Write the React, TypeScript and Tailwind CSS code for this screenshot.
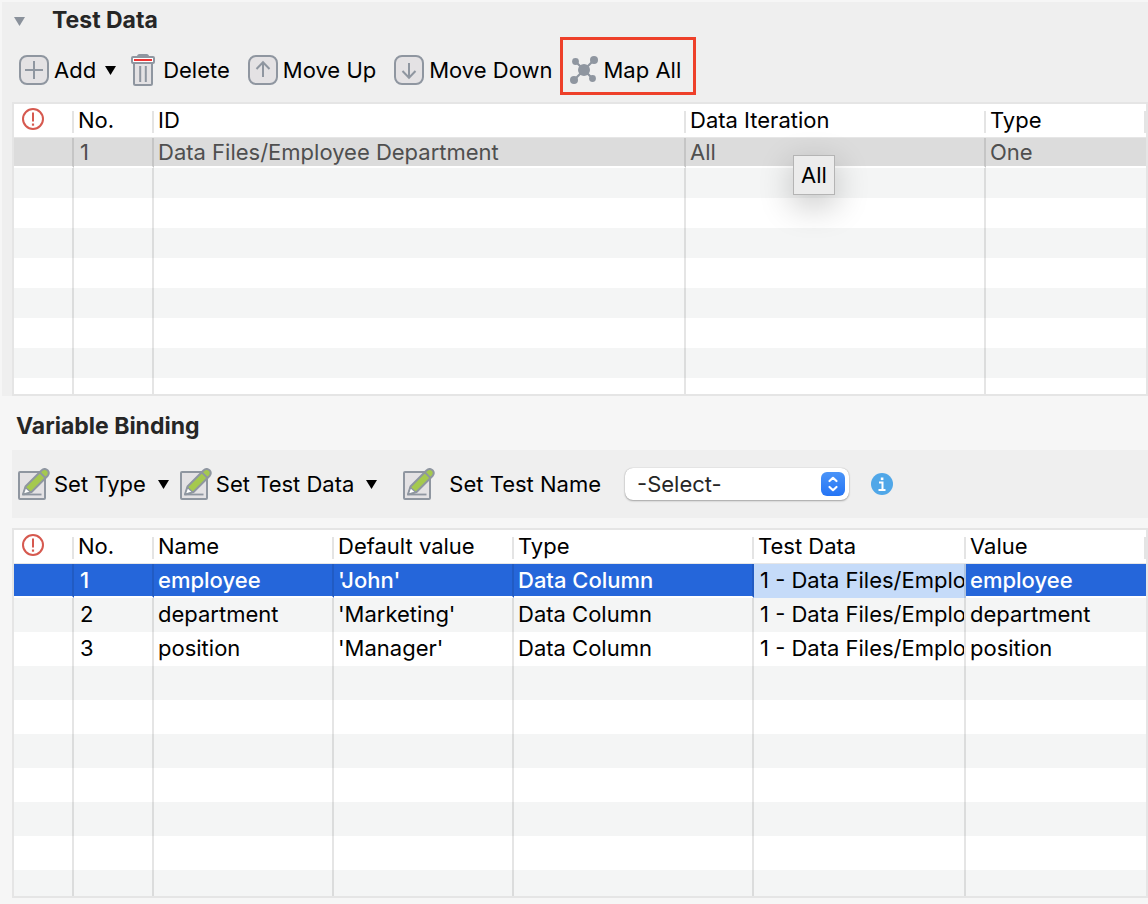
import React from "react";

type IconProps = { className?: string };

function PlusIcon() {
  return (
    <svg width="30" height="30" viewBox="0 0 30 30" fill="none" aria-hidden="true" className="shrink-0">
      <rect x="1" y="1" width="28" height="28" rx="7" fill="#e4e2e4" stroke="#8f96a0" strokeWidth="2" />
      <path d="M15 6v18M6 15h18" stroke="#8f96a0" strokeWidth="2" />
    </svg>
  );
}

function ArrowBoxIcon({ className = "" }: IconProps) {
  return (
    <svg width="30" height="30" viewBox="0 0 30 30" fill="none" aria-hidden="true" className={`shrink-0 ${className}`}>
      <rect x="1" y="1" width="28" height="28" rx="7" fill="#e4e2e4" stroke="#8f96a0" strokeWidth="2" />
      <path d="M15 22V7.5M8.5 14 15 7.2 21.5 14" stroke="#8f96a0" strokeWidth="2" />
    </svg>
  );
}

function TrashIcon() {
  return (
    <svg width="24" height="32" viewBox="0 0 24 32" fill="none" aria-hidden="true" className="shrink-0">
      <path d="M6 2.5Q6 0 8.5 0h7Q18 0 18 2.5z" fill="#8f96a0" />
      <path d="M3 9v20.5q0 1.5 1.5 1.5h15q1.5 0 1.5-1.5V9" fill="#e4e2e4" stroke="#8f96a0" strokeWidth="2" />
      <rect x="1" y="3" width="22" height="6" rx="1" fill="#fff" stroke="#8f96a0" strokeWidth="2" />
      <rect x="3" y="5" width="18" height="2" fill="#ee3333" />
      <path d="M9.200 12v16M14.800 12v16" stroke="#8f96a0" strokeWidth="2" />
    </svg>
  );
}

function NodesIcon() {
  return (
    <svg width="28" height="28" viewBox="0 0 28 28" aria-hidden="true" className="shrink-0">
      <path d="M6 6 14 14 23 5M22 22 14 14 4 24" stroke="#8f96a0" strokeWidth="2.2" fill="none" />
      <circle cx="14" cy="14" r="6" fill="#8f96a0" />
      <circle cx="5.5" cy="5.5" r="3.4" fill="#8f96a0" />
      <circle cx="24" cy="4" r="4" fill="#8f96a0" />
      <circle cx="22.5" cy="22.5" r="3.4" fill="#8f96a0" />
      <circle cx="4" cy="24" r="4" fill="#8f96a0" />
    </svg>
  );
}

function EditIcon() {
  return (
    <svg width="32" height="32" viewBox="0 0 32 32" fill="none" aria-hidden="true" className="shrink-0">
      <rect x="1" y="4" width="26" height="27" rx="1" fill="#e4e2e4" stroke="#8f96a0" strokeWidth="2" />
      <path d="M6 26.500h17.500" stroke="#8f96a0" strokeWidth="1.8" />
      <path d="M5 26.500 7.500 18.500 23.500 2.500Q26.500-.3 29.500 2.200 32 5 29.500 8L13.500 24z" fill="#a5c94e" stroke="#8f96a0" strokeWidth="2" strokeLinejoin="round" />
      <path d="M5 26.500 7.500 19.500 12.500 24z" fill="#fff" stroke="#8f96a0" strokeWidth="1.500" strokeLinejoin="round" />
      <path d="m22 4.500 5.500 5.500" stroke="#8f96a0" strokeWidth="1.8" />
    </svg>
  );
}

function AlertIcon() {
  return (
    <svg width="22" height="22" viewBox="0 0 22 22" fill="none" role="img" aria-label="Problems" className="shrink-0">
      <circle cx="11" cy="11" r="10" stroke="#d6594f" strokeWidth="2" />
      <path d="M11 4.500v9" stroke="#d6594f" strokeWidth="2" />
      <path d="M11 15.500v2.200" stroke="#d6594f" strokeWidth="2.200" />
    </svg>
  );
}

function InfoIcon() {
  return (
    <svg width="22" height="22" viewBox="0 0 22 22" fill="none" aria-hidden="true">
      <circle cx="11" cy="11" r="11" fill="#50a7e8" />
      <path d="M9.800 4.500h2.600v2.600H9.800z" fill="#fff" />
      <path d="M8 9.500h3.500v7M7.500 17h7" stroke="#fff" strokeWidth="2" />
    </svg>
  );
}

function Caret({ className = "" }: IconProps) {
  return (
    <svg width="11" height="9" viewBox="0 0 11 9" aria-hidden="true" className={`shrink-0 ${className}`}>
      <path d="M0 0h11L5.500 9z" fill="currentColor" />
    </svg>
  );
}

const headCell = "h-[34px] border-b border-[#e6e6e6] bg-white p-0 pt-0.5 text-left font-normal";

function HeadRow({ labels }: { labels: string[] }) {
  return (
    <tr>
      <th className={headCell}>
        <div className="flex h-[22px] items-center border-r-2 border-[#e4e4e4] pb-1.5 pl-2">
          <AlertIcon />
        </div>
      </th>
      {labels.map((label) => (
        <th key={label} scope="col" className={headCell}>
          <div className="flex h-[22px] items-center border-r-2 border-[#e4e4e4] pb-1 pl-1 whitespace-nowrap">
            {label}
          </div>
        </th>
      ))}
    </tr>
  );
}

const divider = "border-r-2 border-r-black/10 last:border-r-0";

function EmptyRows({ heights, columns }: { heights: string[]; columns: number }) {
  return (
    <>
      {heights.map((height, i) => (
        <tr key={i} className={i % 2 === 0 ? "bg-[#f4f5f5]" : "bg-white"}>
          {Array.from({ length: columns }, (_, c) => (
            <td key={c} className={`p-0 ${height} ${divider}`} />
          ))}
        </tr>
      ))}
    </>
  );
}

const bindings = [
  { no: 1, name: "employee", value: "'John'", selected: true },
  { no: 2, name: "department", value: "'Marketing'", selected: false },
  { no: 3, name: "position", value: "'Manager'", selected: false },
];

function TestDataSection() {
  const cell = `h-[30px] border-b-2 border-b-white p-0 ${divider}`;
  return (
    <section className="mt-0.5 ml-0.5 bg-[#efefef] pl-2.5">
      <div className="flex h-[35px] items-center">
        <button type="button" aria-label="Collapse Test Data" className="ml-0.5 flex w-[38px] text-[#8a919b]">
          <Caret className="mt-1" />
        </button>
        <h2 className="text-[23px] font-bold text-[#262626]">Test Data</h2>
      </div>
      <div className="flex h-[58px] items-stretch pl-[7px]">
        <button type="button" className="flex items-center gap-[5px] pt-2 whitespace-nowrap">
          <PlusIcon />
          Add
          <Caret className="ml-1" />
        </button>
        <button type="button" className="ml-[15px] flex items-center gap-2 pt-2">
          <TrashIcon />
          Delete
        </button>
        <button type="button" className="ml-[18px] flex items-center gap-[5px] pt-2 whitespace-nowrap">
          <ArrowBoxIcon />
          Move Up
        </button>
        <button type="button" className="ml-[18px] flex items-center gap-[5px] pt-2 whitespace-nowrap">
          <ArrowBoxIcon className="rotate-180" />
          Move Down
        </button>
        <button
          type="button"
          className="ml-[7px] flex items-center gap-1.5 border-[3px] border-[#ee402a] pt-2 pr-3 pl-[7px] whitespace-nowrap"
        >
          <NodesIcon />
          Map All
        </button>
      </div>
      <div className="mt-[7px] border-2 border-[#e5e5e5]">
        <table className="w-full table-fixed border-separate border-spacing-0">
          <colgroup>
            <col className="w-[60px]" />
            <col className="w-20" />
            <col />
            <col className="w-[300px]" />
            <col className="w-40" />
          </colgroup>
          <thead>
            <HeadRow labels={["No.", "ID", "Data Iteration", "Type"]} />
          </thead>
          <tbody>
            <tr className="bg-[#dcdcdc] text-[#4f4f4f]">
              <td className={cell} />
              <td className={`pl-1.5! ${cell}`}>1</td>
              <td className={`pl-1! ${cell}`}>Data Files/Employee Department</td>
              <td className={`relative pl-1! ${cell}`}>
                All
                <div
                  role="tooltip"
                  className="absolute top-[17px] left-[107px] z-10 flex h-10 w-[42px] items-center justify-center border border-[#b4b4b4] bg-[#ececec] text-black shadow-[0_10px_34px_rgba(0,0,0,0.24)]"
                >
                  All
                </div>
              </td>
              <td className={`pl-1! ${cell}`}>One</td>
            </tr>
            <EmptyRows
              columns={5}
              heights={["h-[30px]", "h-[30px]", "h-[30px]", "h-[30px]", "h-[30px]", "h-[30px]", "h-[30px]", "h-4"]}
            />
          </tbody>
        </table>
      </div>
    </section>
  );
}

function VariableBindingSection() {
  return (
    <section className="pb-1.5 pl-3">
      <h2 className="flex h-[54px] items-center pt-1.5 pl-1 text-[23px] font-bold text-[#262626]">Variable Binding</h2>
      <div className="flex h-[68px] items-center bg-[#efefef] pl-1.5">
        <button type="button" className="flex items-center gap-1 whitespace-nowrap">
          <EditIcon />
          Set Type
          <Caret className="ml-2" />
        </button>
        <button type="button" className="ml-[11px] flex items-center gap-1 whitespace-nowrap">
          <EditIcon />
          Set Test Data
          <Caret className="ml-2" />
        </button>
        <label htmlFor="test-name" className="ml-[26px] flex items-center gap-3.5 whitespace-nowrap">
          <EditIcon />
          Set Test Name
        </label>
        <div className="relative ml-6">
          <select
            id="test-name"
            className="block h-8 w-56 appearance-none rounded-lg bg-white pl-3 text-[#262626] shadow-[0_0_1px_rgba(0,0,0,0.3),0_1px_2px_rgba(0,0,0,0.3)]"
          >
            <option>-Select-</option>
          </select>
          <span className="pointer-events-none absolute top-1 right-1 flex size-6 items-center justify-center rounded-[6px] bg-linear-to-b from-[#4a94f8] to-[#2474f5]">
            <svg width="12" height="16" viewBox="0 0 12 16" fill="none" aria-hidden="true">
              <path d="M2.500 5 6 1.800 9.500 5M2.500 11 6 14.200 9.500 11" stroke="#fff" strokeWidth="2.200" strokeLinecap="round" strokeLinejoin="round" />
            </svg>
          </span>
        </div>
        <button type="button" aria-label="Test name help" className="ml-[22px]">
          <InfoIcon />
        </button>
      </div>
      <div className="mt-2.5 border-2 border-[#e5e5e5]">
        <table className="w-full table-fixed border-separate border-spacing-0">
          <colgroup>
            <col className="w-[60px]" />
            <col className="w-20" />
            <col className="w-[180px]" />
            <col className="w-[180px]" />
            <col className="w-60" />
            <col className="w-[212px]" />
            <col />
          </colgroup>
          <thead>
            <HeadRow labels={["No.", "Name", "Default value", "Type", "Test Data", "Value"]} />
          </thead>
          <tbody>
            {bindings.map((row) => {
              const cell = row.selected
                ? `h-[34px] border-b-2 border-b-white bg-[#2566da] py-0 pr-0 font-medium text-white ${divider}`
                : `h-[34px] pt-0 pr-0 pb-0.5 ${divider}`;
              return (
                <tr key={row.no} className={row.no === 2 ? "bg-[#f4f5f5]" : "bg-white"}>
                  <td className={cell} />
                  <td className={`pl-1.5 ${cell}`}>{row.no}</td>
                  <td className={`pl-1 ${cell}`}>{row.name}</td>
                  <td className={`pl-1 ${cell}`}>{row.value}</td>
                  <td className={`pl-1 ${cell}`}>Data Column</td>
                  <td
                    className={`h-[34px] overflow-hidden pt-0 pr-0 pb-0.5 pl-1.5 whitespace-nowrap ${divider} ${row.selected ? "bg-[#c5dbf9]" : ""}`}
                  >
                    1 - Data Files/Employee Department
                  </td>
                  <td className={`pl-1 ${cell}`}>{row.name}</td>
                </tr>
              );
            })}
            <EmptyRows
              columns={7}
              heights={["h-[34px]", "h-[34px]", "h-[34px]", "h-[34px]", "h-[34px]", "h-[34px]", "h-[26px]"]}
            />
          </tbody>
        </table>
      </div>
    </section>
  );
}

export default function App() {
  return (
    <main className="flow-root min-h-screen bg-[#f6f6f6] font-['Inter',sans-serif] text-[22px] leading-7 text-black">
      <TestDataSection />
      <VariableBindingSection />
    </main>
  );
}
